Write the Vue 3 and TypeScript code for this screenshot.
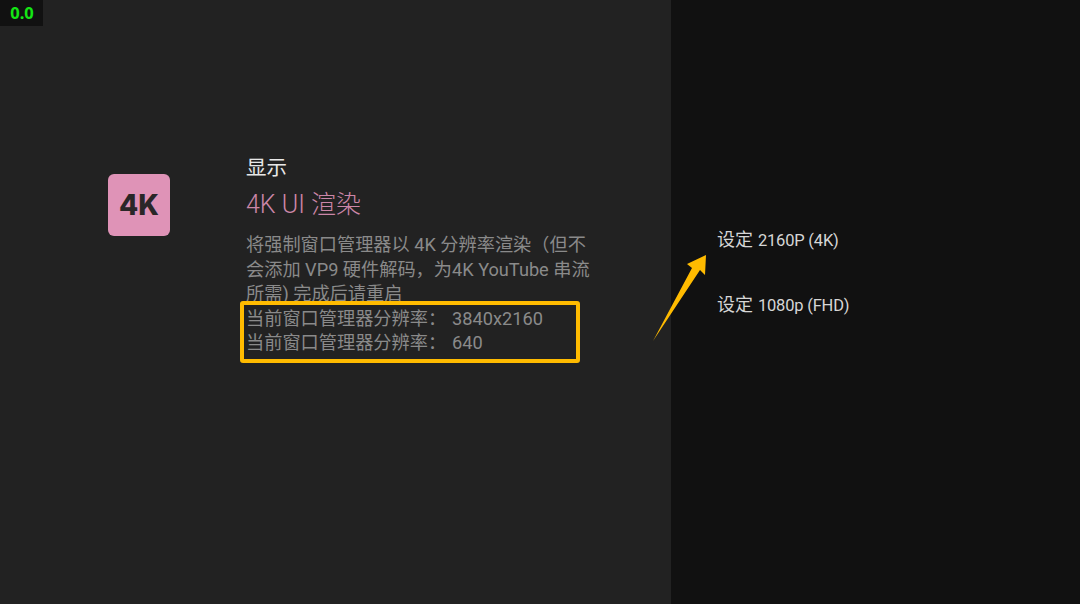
<script setup lang="ts">
interface Option { label: string; value: string }
const options: Option[] = [
  { label: '设定', value: '2160P (4K)' },
  { label: '设定', value: '1080p (FHD)' },
]
const resolutions: string[] = ['3840x2160', '640']
</script>

<template>
  <div class="screen">
    <div class="fps">0.0</div>
    <section class="panel">
      <div class="badge" aria-label="4K">4K</div>
      <div class="info">
        <div class="category">显示</div>
        <h1 class="title">4K UI 渲染</h1>
        <p class="desc">将强制窗口管理器以 4K 分辨率渲染（但不会添加 VP9 硬件解码，为4K YouTube 串流所需) 完成后请重启</p>
        <div class="res-list">
          <div v-for="r in resolutions" :key="r" class="res"><span>当前窗口管理器分辨率：</span><span class="val">{{ r }}</span></div>
        </div>
      </div>
    </section>
    <aside class="menu">
      <div v-for="o in options" :key="o.value" class="item"><span class="label">{{ o.label }}</span> <span class="value">{{ o.value }}</span></div>
    </aside>
    <div class="highlight"></div>
    <svg class="arrow" width="1080" height="604" viewBox="0 0 1080 604" aria-hidden="true">
      <path d="M653 341 L692 268 L687 264 L706 255 L705 275 L700 270 Z" fill="#ffbb00" />
    </svg>
  </div>
</template>

<style>
html, body { margin: 0; background: #111; }
</style>

<style scoped>
.screen {
  position: relative;
  width: 1080px;
  height: 604px;
  display: flex;
  overflow: hidden;
  background: #111111;
  font-family: Roboto, "Noto Sans CJK SC", sans-serif;
}
.fps {
  position: absolute;
  left: 0;
  top: 0;
  width: 43px;
  height: 26px;
  padding-left: 1px;
  box-sizing: border-box;
  line-height: 25px;
  text-align: center;
  background: #111111;
  color: #14e614;
  font-size: 16.5px;
  font-weight: 700;
  font-family: "Noto Sans", sans-serif;
}
.panel {
  width: 671px;
  box-sizing: border-box;
  background: #222222;
  display: flex;
  align-items: flex-start;
  padding: 155px 0 0 108px;
}
.badge {
  width: 62px;
  height: 62px;
  margin-top: 19px;
  flex: none;
  border-radius: 6px;
  background: #df93b7;
  color: #2a2628;
  font-size: 28px;
  font-weight: 800;
  line-height: 62px;
  text-align: center;
  font-family: Inter, sans-serif;
}
.info {
  margin-left: 76px;
  width: 356px;
}
.category {
  color: #e8e8e8;
  font-size: 20.5px;
  line-height: 27px;
}
.title {
  margin: 6px 0 0;
  color: #cb86a8;
  font-size: 25px;
  font-weight: 300;
  line-height: 34px;
}
.desc {
  margin: 11px 0 0;
  color: #8a8a8a;
  font-size: 18.2px;
  line-height: 24.6px;
}
.res {
  color: #8a8a8a;
  font-size: 18.2px;
  line-height: 24.6px;
  white-space: nowrap;
}
.val { margin-left: 6px; }
.menu {
  padding: 207px 0 0 46px;
}
.item {
  color: #d6d6d6;
  line-height: 65px;
  height: 65px;
}
.label { font-size: 18px; }
.value {
  font-size: 16.5px;
  letter-spacing: -0.2px;
  margin-left: 1px;
}
.highlight {
  position: absolute;
  left: 240px;
  top: 301px;
  width: 340px;
  height: 62px;
  box-sizing: border-box;
  border: 4px solid #ffbb00;
  border-radius: 3px;
}
.arrow {
  position: absolute;
  left: 0;
  top: 0;
}
</style>
